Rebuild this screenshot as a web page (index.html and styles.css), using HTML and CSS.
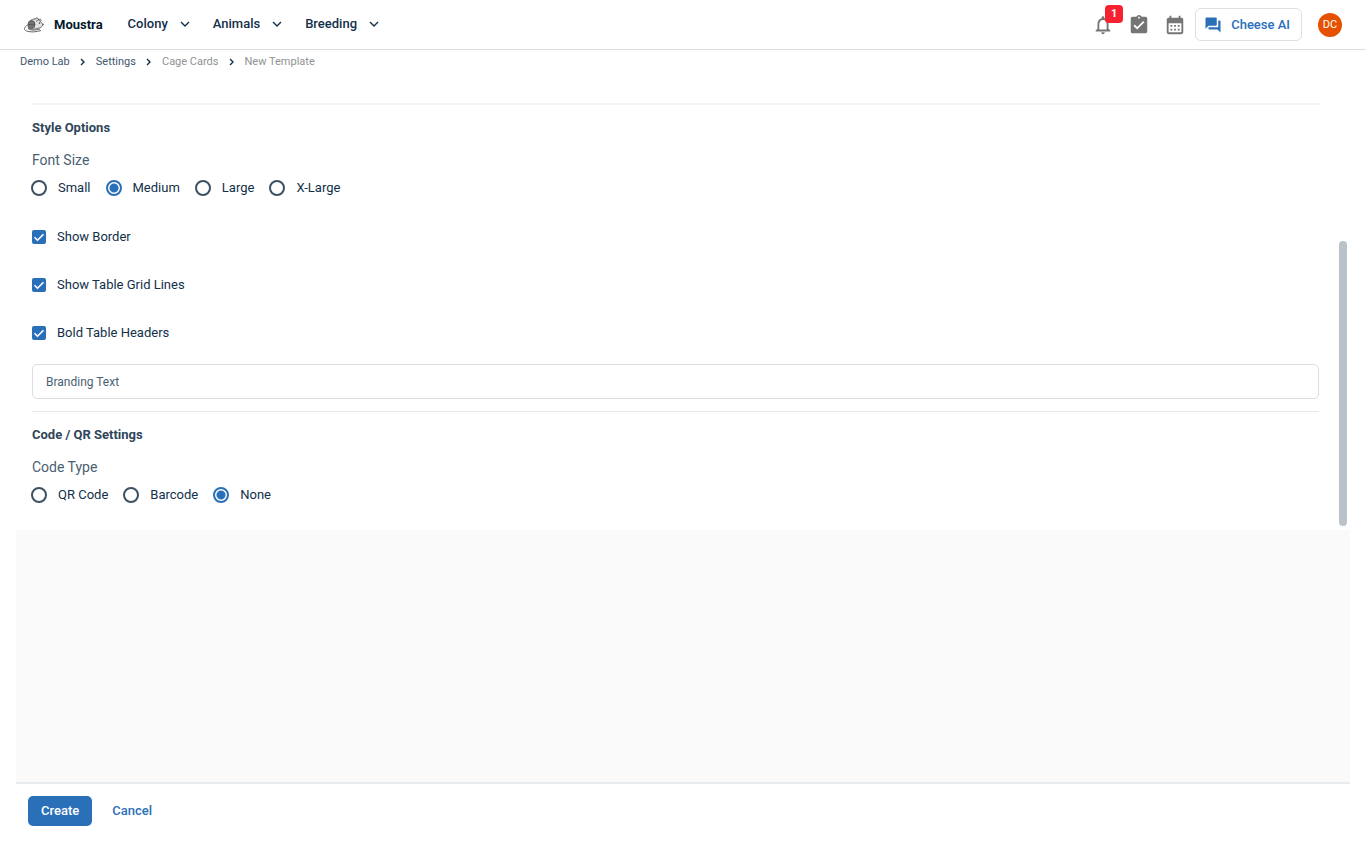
FILE: index.html
```html
<!DOCTYPE html>
<html lang="en">
<head>
    <meta charset="UTF-8">
    <meta name="viewport" content="width=device-width, initial-scale=1">
    <title>Moustra - New Template</title>
    <link rel="stylesheet" href="styles.css">
</head>
<body>
<header class="topbar">
    <a class="brand" href="#">
        <svg class="brand-logo" viewBox="0 0 40 32" aria-hidden="true">
            <path d="M9 22C6 12 12 5 20 4c6-1 10 1 12 4l6 7c-1 5-6 7-12 8-6 2-13 2-17-1z" fill="#e4e4e4" stroke="#555" stroke-width="1.6"/>
            <ellipse cx="15" cy="15" rx="7" ry="8" fill="#8a8a8a" stroke="#555" stroke-width="1.5"/>
            <path d="M12 8v14M16 7v16M20 9v12M8 15h14" fill="none" stroke="#4a4a4a" stroke-width="1.4"/>
            <path d="M22 5c1-4 6-4 7-1 0 3-3 5-5 4M30 6c1-3 5-2 4 2" fill="#ddd" stroke="#444" stroke-width="1.5"/>
            <circle cx="31" cy="12" r="1.4" fill="#222"/>
            <circle cx="38" cy="15" r="1.4" fill="#444"/>
            <path d="M7 16C0 20-1 26 5 28c9 3 20 2 29-1M8 23c5 4 15 4 24 1" fill="none" stroke="#666" stroke-width="2"/>
        </svg>
        <span>Moustra</span>
    </a>
    <nav class="menu">
        <button class="menu-btn" type="button">Colony
            <svg class="chevron" viewBox="0 0 10 10"><path d="M1 3l4 4 4-4"/></svg>
        </button>
        <button class="menu-btn" type="button">Animals
            <svg class="chevron" viewBox="0 0 10 10"><path d="M1 3l4 4 4-4"/></svg>
        </button>
        <button class="menu-btn" type="button">Breeding
            <svg class="chevron" viewBox="0 0 10 10"><path d="M1 3l4 4 4-4"/></svg>
        </button>
    </nav>
    <div class="actions">
        <button class="icon-btn" type="button" aria-label="Notifications">
            <svg viewBox="0 0 24 24"><path d="M12 22c1.1 0 2-.9 2-2h-4c0 1.1.9 2 2 2m6-6v-5c0-3.07-1.63-5.64-4.5-6.32V4c0-.83-.67-1.5-1.5-1.5s-1.5.67-1.5 1.5v.68C7.64 5.36 6 7.92 6 11v5l-2 2v1h16v-1zm-2 1H8v-6c0-2.48 1.51-4.5 4-4.5s4 2.02 4 4.5z"/></svg>
            <span class="badge">1</span>
        </button>
        <button class="icon-btn" type="button" aria-label="Tasks">
            <svg viewBox="0 0 24 24"><path d="M19 3h-4.18C14.4 1.84 13.3 1 12 1c-1.3 0-2.4.84-2.82 2H5c-1.1 0-2 .9-2 2v14c0 1.1.9 2 2 2h14c1.1 0 2-.9 2-2V5c0-1.1-.9-2-2-2m-7 0c.55 0 1 .45 1 1s-.45 1-1 1-1-.45-1-1 .45-1 1-1m-2 14-4-4 1.41-1.41L10 14.17l6.59-6.59L18 9z"/></svg>
        </button>
        <button class="icon-btn" type="button" aria-label="Calendar">
            <svg viewBox="0 0 24 24"><path d="M19 4h-1V2h-2v2H8V2H6v2H5c-1.11 0-1.99.9-1.99 2L3 20c0 1.1.89 2 2 2h14c1.1 0 2-.9 2-2V6c0-1.1-.9-2-2-2m0 16H5V10h14zM9 14H7v-2h2zm4 0h-2v-2h2zm4 0h-2v-2h2zm-8 4H7v-2h2zm4 0h-2v-2h2zm4 0h-2v-2h2z"/></svg>
        </button>
        <button class="ai-btn" type="button">
            <svg viewBox="0 0 24 24"><path d="M21 6h-2v9H6v2c0 .55.45 1 1 1h11l4 4V7c0-.55-.45-1-1-1m-4 6V3c0-.55-.45-1-1-1H3c-.55 0-1 .45-1 1v14l4-4h10c.55 0 1-.45 1-1"/></svg>
            Cheese AI
        </button>
        <button class="avatar" type="button">DC</button>
    </div>
</header>

<nav class="breadcrumbs">
    <a href="#">Demo Lab</a>
    <svg class="sep" viewBox="0 0 8 8"><path d="M2 1l3 3-3 3"/></svg>
    <a href="#">Settings</a>
    <svg class="sep" viewBox="0 0 8 8"><path d="M2 1l3 3-3 3"/></svg>
    <span>Cage Cards</span>
    <svg class="sep" viewBox="0 0 8 8"><path d="M2 1l3 3-3 3"/></svg>
    <span>New Template</span>
</nav>

<form class="editor">
    <div class="pane">
        <hr class="divider divider-thick">
        <h2>Style Options</h2>
        <fieldset>
            <legend>Font Size</legend>
            <div class="radios">
                <label><input type="radio" name="size">Small</label>
                <label><input type="radio" name="size" checked>Medium</label>
                <label><input type="radio" name="size">Large</label>
                <label><input type="radio" name="size">X-Large</label>
            </div>
        </fieldset>
        <div class="checks">
            <label><input type="checkbox" checked>Show Border</label>
            <label><input type="checkbox" checked>Show Table Grid Lines</label>
            <label><input type="checkbox" checked>Bold Table Headers</label>
        </div>
        <input class="text-field" type="text" placeholder="Branding Text" aria-label="Branding Text">
        <hr class="divider">
        <h2>Code / QR Settings</h2>
        <fieldset>
            <legend>Code Type</legend>
            <div class="radios">
                <label><input type="radio" name="code">QR Code</label>
                <label><input type="radio" name="code">Barcode</label>
                <label><input type="radio" name="code" checked>None</label>
            </div>
        </fieldset>
        <div class="scroll-thumb"></div>
    </div>
    <div class="preview"></div>
    <div class="footer">
        <button class="btn btn-primary" type="button">Create</button>
        <button class="btn" type="button">Cancel</button>
    </div>
</form>
</body>
</html>
```
FILE: styles.css
```css
* {
    box-sizing: border-box;
}

body {
    margin: 0;
    min-height: 100vh;
    display: flex;
    flex-direction: column;
    font-family: Roboto, "Noto Sans", sans-serif;
    font-size: 13px;
    line-height: 20px;
    color: #12304a;
    background: #fff;
}

button,
input {
    font: inherit;
    color: inherit;
}

button {
    border: none;
    background: none;
    padding: 0;
    cursor: pointer;
}

a {
    color: inherit;
    text-decoration: none;
}

.topbar {
    display: flex;
    align-items: center;
    height: 50px;
    padding: 0 24px;
    border-bottom: 1px solid #dcdfe2;
}

.brand {
    display: flex;
    align-items: center;
    gap: 10px;
    font-weight: 700;
    color: #05192d;
}

.brand-logo {
    width: 20px;
    height: 16px;
}

.menu {
    display: flex;
    gap: 23px;
    margin-left: 25px;
    padding-bottom: 2px;
}

.menu-btn {
    display: flex;
    align-items: center;
    gap: 12px;
    font-weight: 500;
}

.chevron {
    width: 10px;
    height: 10px;
}

.chevron path,
.sep path {
    fill: none;
    stroke: #12304a;
    stroke-width: 1.4;
}

.actions {
    display: flex;
    align-items: center;
    margin-left: auto;
}

.icon-btn {
    position: relative;
    display: flex;
    justify-content: center;
    width: 36px;
}

.icon-btn svg {
    width: 22px;
    height: 22px;
    fill: #757575;
}

.badge {
    position: absolute;
    top: -9px;
    right: -2px;
    width: 18px;
    height: 18px;
    border-radius: 4px;
    background: #f8212f;
    color: #fff;
    font-size: 11px;
    font-weight: 700;
    line-height: 18px;
}

.ai-btn {
    display: flex;
    align-items: center;
    gap: 9px;
    height: 33px;
    margin: 0 16px 0 2px;
    padding: 0 11px 0 8px;
    border: 1px solid #dbe0e5;
    border-radius: 6px;
    color: #2a70b8;
    font-weight: 500;
}

.ai-btn svg {
    width: 18px;
    height: 18px;
    fill: #2a70b8;
}

.avatar {
    width: 24px;
    height: 24px;
    border-radius: 50%;
    background: #e65100;
    color: #fff;
    font-size: 11px;
}

.breadcrumbs {
    display: flex;
    align-items: center;
    gap: 9px;
    height: 22px;
    padding: 2px 20px 0;
    font-size: 11px;
    color: #919191;
}

.breadcrumbs a {
    color: #41586d;
}

.sep {
    width: 8px;
    height: 8px;
}

.editor {
    flex: 1;
    display: flex;
    flex-direction: column;
    margin: 0 16px;
}

.pane {
    position: relative;
    padding: 31px 31px 24px 16px;
}

.divider {
    height: 1px;
    margin: 12px 0;
    border: none;
    background: #e6e9ec;
}

.divider-thick {
    height: 2px;
    margin-top: 0;
    background: #f2f3f4;
}

h2 {
    margin: 0 0 11px;
    font-size: 13px;
    font-weight: 700;
    line-height: 22px;
    color: #2f4559;
}

fieldset {
    margin: 0;
    padding: 0;
    border: none;
}

legend {
    margin-bottom: 7px;
    padding: 0;
    font-size: 14px;
    color: #4a5f72;
}

.radios {
    display: flex;
    gap: 15px;
    margin-left: -1px;
    line-height: 22px;
}

.radios label,
.checks label {
    display: flex;
    align-items: center;
    gap: 11px;
}

.radios input {
    appearance: none;
    width: 16px;
    height: 16px;
    margin: 0;
    border: 2px solid #3c5163;
    border-radius: 50%;
}

.radios input:checked {
    border-color: #2a70b8;
    background: radial-gradient(circle, #2a70b8 4px, transparent 5px);
}

.checks {
    margin: 14px 0 7px;
}

.checks label {
    height: 48px;
}

.checks input {
    appearance: none;
    width: 14px;
    height: 14px;
    margin: 0;
    border-radius: 2px;
    background: #2a70b8 url("data:image/svg+xml,%3Csvg xmlns='http://www.w3.org/2000/svg' viewBox='0 0 14 14'%3E%3Cpath d='M2.5 7.2l3 3 6-6' fill='none' stroke='white' stroke-width='1.6'/%3E%3C/svg%3E");
}

.text-field {
    display: block;
    width: 100%;
    height: 35px;
    padding: 0 13px;
    border: 1px solid #d8dee4;
    border-radius: 5px;
    font-size: 12px;
    background: #fff;
}

.text-field::placeholder {
    color: #4a5f72;
    opacity: 1;
}

.scroll-thumb {
    position: absolute;
    right: 3px;
    bottom: 4px;
    width: 8px;
    height: 285px;
    border-radius: 4px;
    background: #bac3ca;
}

.preview {
    flex: 1;
    background: #fafafa;
}

.footer {
    display: flex;
    gap: 7px;
    padding: 12px 12px 28px;
    border-top: 2px solid #e9ecef;
}

.btn {
    height: 30px;
    padding: 0 13px;
    border-radius: 5px;
    font-weight: 500;
    color: #2a70b8;
}

.btn-primary {
    background: #2a70b8;
    color: #fff;
}
```
